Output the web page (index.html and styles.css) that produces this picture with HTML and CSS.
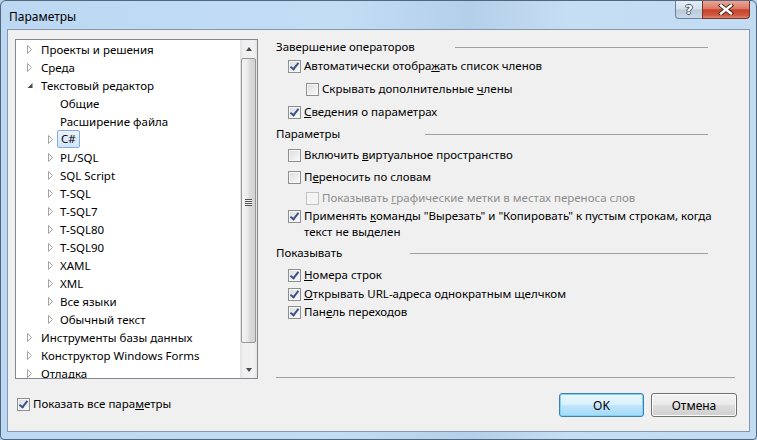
FILE: index.html
```html
<!DOCTYPE html>
<html>
  <head>
    <meta charset="utf-8">
    <title>Параметры</title>
    <link rel="stylesheet" href="styles.css">
  </head>
  <body>
    <svg width="0" height="0" class="defs">
      <symbol id="tw-closed" viewBox="0 0 6 9">
        <polygon points="0.5,0.5 4.5,4.5 0.5,8.5" fill="#fff" stroke="#a3a3a3" stroke-width="1"/>
      </symbol>
      <symbol id="tw-open" viewBox="0 0 6 9">
        <polygon points="5.5,2 5.5,7 0.5,7" fill="#4a4a4a"/>
      </symbol>
    </svg>

    <div class="window">
      <div class="titlebar">
        <span class="title">Параметры</span>
        <div class="caption-btns">
          <div class="cap help">?</div>
          <div class="cap close">
            <svg width="16" height="11" viewBox="0 0 16 11">
              <path d="M3 1.5 L13 9.5 M13 1.5 L3 9.5" stroke="#3b2420" stroke-width="4.2" stroke-linecap="square"/>
              <path d="M3 1.5 L13 9.5 M13 1.5 L3 9.5" stroke="#fff" stroke-width="2.4" stroke-linecap="square"/>
            </svg>
          </div>
        </div>
      </div>

      <div class="client">
        <div class="left">
          <div class="tree">
            <ul class="tree-list">
              <li class="node l0"><svg class="tw"><use href="#tw-closed"/></svg>Проекты и решения</li>
              <li class="node l0"><svg class="tw"><use href="#tw-closed"/></svg>Среда</li>
              <li class="node l0"><svg class="tw"><use href="#tw-open"/></svg>Текстовый редактор</li>
              <li class="node l1"><svg class="tw"></svg>Общие</li>
              <li class="node l1"><svg class="tw"></svg>Расширение файла</li>
              <li class="node l1"><svg class="tw"><use href="#tw-closed"/></svg><span class="sel">C#</span></li>
              <li class="node l1"><svg class="tw"><use href="#tw-closed"/></svg>PL/SQL</li>
              <li class="node l1"><svg class="tw"><use href="#tw-closed"/></svg>SQL Script</li>
              <li class="node l1"><svg class="tw"><use href="#tw-closed"/></svg>T-SQL</li>
              <li class="node l1"><svg class="tw"><use href="#tw-closed"/></svg>T-SQL7</li>
              <li class="node l1"><svg class="tw"><use href="#tw-closed"/></svg>T-SQL80</li>
              <li class="node l1"><svg class="tw"><use href="#tw-closed"/></svg>T-SQL90</li>
              <li class="node l1"><svg class="tw"><use href="#tw-closed"/></svg>XAML</li>
              <li class="node l1"><svg class="tw"><use href="#tw-closed"/></svg>XML</li>
              <li class="node l1"><svg class="tw"><use href="#tw-closed"/></svg>Все языки</li>
              <li class="node l1"><svg class="tw"><use href="#tw-closed"/></svg>Обычный текст</li>
              <li class="node l0"><svg class="tw"><use href="#tw-closed"/></svg>Инструменты базы данных</li>
              <li class="node l0"><svg class="tw"><use href="#tw-closed"/></svg>Конструктор Windows Forms</li>
              <li class="node l0"><svg class="tw"><use href="#tw-closed"/></svg>Отладка</li>
            </ul>
            <div class="vscroll">
              <div class="sb-btn"><span class="arr up"></span></div>
              <div class="sb-track">
                <div class="thumb"><span class="grip"></span></div>
              </div>
              <div class="sb-btn"><span class="arr down"></span></div>
            </div>
          </div>
          <div class="opt show-all"><span class="cb on"></span><span class="txt">Показать все пара<u>м</u>етры</span></div>
        </div>

        <div class="right">
          <div class="options">
            <div class="hdr"><span>Завершение операторов</span><span class="rule r1"></span></div>
            <div class="opt snug"><span class="cb on"></span><span class="txt">Автоматически отобра<u>ж</u>ать список членов</span></div>
            <div class="opt sub loose"><span class="cb"></span><span class="txt">Скрывать дополнительные <u>ч</u>лены</span></div>
            <div class="opt loose"><span class="cb on"></span><span class="txt"><u>С</u>ведения о параметрах</span></div>

            <div class="hdr wide"><span>Параметры</span><span class="rule r2"></span></div>
            <div class="opt"><span class="cb"></span><span class="txt">Включить <u>в</u>иртуальное пространство</span></div>
            <div class="opt wide"><span class="cb"></span><span class="txt">П<u>е</u>реносить по словам</span></div>
            <div class="opt sub off"><span class="cb"></span><span class="txt">Показывать <u>г</u>рафические метки в местах переноса слов</span></div>
            <div class="opt tight"><span class="cb on"></span><span class="txt">Применять <u>к</u>оманды "Вырезать" и "Копировать" к пустым строкам, когда<br>текст не выделен</span></div>

            <div class="hdr"><span>Показывать</span><span class="rule r3"></span></div>
            <div class="opt wide"><span class="cb on"></span><span class="txt"><u>Н</u>омера строк</span></div>
            <div class="opt snug"><span class="cb on"></span><span class="txt"><u>О</u>ткрывать URL-адреса однократным щелчком</span></div>
            <div class="opt tight"><span class="cb on"></span><span class="txt">Пан<u>е</u>ль переходов</span></div>
          </div>

          <div class="sep"></div>
          <div class="buttons">
            <button class="btn default">OK</button>
            <button class="btn">Отмена</button>
          </div>
        </div>
      </div>
    </div>
  </body>
</html>
```

FILE: styles.css
```css
html, body {
    margin: 0;
    padding: 0;
    background: #b9d3ec;
}
body {
    font-family: "Noto Sans", "Open Sans", sans-serif;
    font-size: 11.5px;
    color: #000;
}
.defs {
    position: absolute;
}

.window {
    width: 757px;
    height: 440px;
    box-sizing: border-box;
    border: 1px solid #52667c;
    border-radius: 6px 6px 4px 4px;
    background: linear-gradient(to right, #bcd8f2 0%, #c3ddf5 45%, #b4cfe9 62%, #c6def4 75%, #c2dcf3 100%);
    display: flex;
    flex-direction: column;
}

/* title bar */
.titlebar {
    height: 28px;
    display: flex;
    align-items: flex-start;
}
.title {
    padding: 8px 0 0 8px;
    line-height: 16px;
    font-size: 12px;
    color: #000;
}
.caption-btns {
    margin-left: auto;
    margin-right: 6px;
    display: flex;
}
.cap {
    height: 18px;
    box-sizing: border-box;
    display: flex;
    align-items: center;
    justify-content: center;
}
.cap.help {
    width: 27px;
    border: 1px solid #6a83a0;
    border-top: none;
    border-right: none;
    border-radius: 0 0 0 4px;
    background: linear-gradient(#e4edf6 0%, #d3e0ec 48%, #b9cadb 52%, #c9d8e6 100%);
    color: #fff;
    font-family: "DejaVu Sans", sans-serif;
    font-weight: bold;
    font-size: 13px;
    text-shadow: -1px 0 #45556a, 1px 0 #45556a, 0 -1px #45556a, 0 1px #45556a;
}
.cap.close {
    width: 48px;
    border: 1px solid #7a3327;
    border-top: none;
    border-radius: 0 0 4px 0;
    background: linear-gradient(#eaa596 0%, #dc7a64 45%, #c7422b 52%, #d25a42 85%, #e08c74 100%);
}

/* client area */
.client {
    flex: 1;
    margin: 0 6px 7px 6px;
    border: 1px solid #8497ad;
    background: #f0f0f0;
    display: flex;
}

.left {
    width: 243px;
    padding: 9px 0 0 7px;
    display: flex;
    flex-direction: column;
}
.tree {
    height: 340px;
    box-sizing: border-box;
    border: 1px solid #828790;
    background: #fff;
    display: flex;
    overflow: hidden;
}
.tree-list {
    flex: 1;
    list-style: none;
    margin: 0;
    padding: 0;
}
.node {
    height: 18px;
    display: flex;
    align-items: center;
    white-space: nowrap;
}
.tw {
    width: 6px;
    height: 9px;
    flex: none;
}
.node.l0 {
    padding-left: 11px;
}
.node.l0 .tw {
    margin-right: 8px;
}
.node.l1 {
    padding-left: 32px;
}
.node.l1 .tw {
    margin-right: 6px;
}
.sel {
    height: 18px;
    line-height: 16px;
    box-sizing: border-box;
    margin-left: -3px;
    padding: 0 3px;
    border: 1px solid #84acdd;
    border-radius: 2px;
    background: linear-gradient(#eaf3fd, #d0e5fb);
}

/* scrollbar */
.vscroll {
    width: 17px;
    display: flex;
    flex-direction: column;
    background: linear-gradient(to right, #e2e2e2 0%, #efefef 20%, #f1f1f1 80%, #e6e6e6 100%);
}
.sb-btn {
    height: 17px;
    display: flex;
    align-items: center;
    justify-content: center;
}
.arr {
    width: 0;
    height: 0;
    border-left: 3.5px solid transparent;
    border-right: 3.5px solid transparent;
}
.arr.up {
    border-bottom: 4px solid #4a4a4a;
}
.arr.down {
    border-top: 4px solid #4a4a4a;
}
.sb-track {
    flex: 1;
    padding: 1px 1px 0 1px;
}
.thumb {
    height: 285px;
    box-sizing: border-box;
    border: 1px solid #979797;
    border-radius: 2px;
    background: linear-gradient(to right, #f4f4f4 0%, #ececec 40%, #dadada 60%, #d2d2d2 100%);
    display: flex;
    align-items: center;
    justify-content: center;
}
.grip {
    width: 7px;
    height: 7px;
    margin-top: 3px;
    background: repeating-linear-gradient(#4f4f4f 0 1px, #f3f3f3 1px 2px);
}

/* options */
.right {
    flex: 1;
    margin-left: 18px;
    margin-right: 12px;
    display: flex;
    flex-direction: column;
}
.options {
    flex: 1;
    padding-top: 9px;
}
.hdr {
    height: 16px;
    line-height: 16px;
    display: flex;
    align-items: center;
    margin-top: 5px;
    white-space: nowrap;
}
.hdr:first-child {
    margin-top: 0;
}
.hdr.wide { margin-top: 6px; }
.rule {
    margin-left: auto;
    margin-right: 29px;
    height: 1px;
    background: #a0a0a0;
}
.rule.r1 { width: 253px; }
.rule.r2 { width: 283px; }
.rule.r3 { width: 298px; }

.opt {
    display: flex;
    align-items: flex-start;
    line-height: 16px;
    padding-left: 12px;
    margin-top: 5px;
    white-space: nowrap;
}
.opt.tight { margin-top: 2px; }
.opt.snug { margin-top: 3px; }
.opt.wide { margin-top: 6px; }
.opt.loose { margin-top: 7px; }
.opt.sub { padding-left: 30px; }
.opt.off { color: #8d8d8d; }

.cb {
    width: 13px;
    height: 13px;
    box-sizing: border-box;
    margin: 2px 3px 0 0;
    flex: none;
    position: relative;
    border: 1px solid #8e8f8f;
    background: linear-gradient(135deg, #dcdcdc 0%, #ebebeb 50%, #fbfbfb 100%);
    box-shadow: inset 0 0 0 1px #f6f6f6;
}
.cb.on::after {
    content: "";
    position: absolute;
    left: 3px;
    top: 0px;
    width: 3px;
    height: 7px;
    border: solid #3a5288;
    border-width: 0 2px 2px 0;
    transform: rotate(38deg);
}
.opt.off .cb {
    border-color: #c4c4c4;
    background: #f4f4f4;
    box-shadow: none;
}
.show-all {
    margin-top: 17px;
    padding-left: 2px;
}

.sep {
    height: 1px;
    background: #a0a0a0;
    margin-right: 2px;
}
.buttons {
    display: flex;
    justify-content: flex-end;
    gap: 7px;
    margin: 15px 0 14px 0;
}
.btn {
    width: 86px;
    height: 24px;
    font-family: "Noto Sans", "Open Sans", sans-serif;
    font-size: 12px;
    color: #000;
    border: 1px solid #707070;
    border-radius: 3px;
    background: linear-gradient(#f2f2f2 0%, #ebebeb 48%, #dddddd 52%, #cfcfcf 100%);
    box-shadow: inset 0 0 0 1px #fbfbfb;
    padding: 0;
}
.btn.default {
    width: 85px;
    border-color: #3c7fb1;
    background: linear-gradient(#eaf6fd 0%, #d9f0fc 48%, #bee6fd 52%, #a7d9f5 100%);
    box-shadow: inset 0 0 0 1px #7fd2f8;
}
```
